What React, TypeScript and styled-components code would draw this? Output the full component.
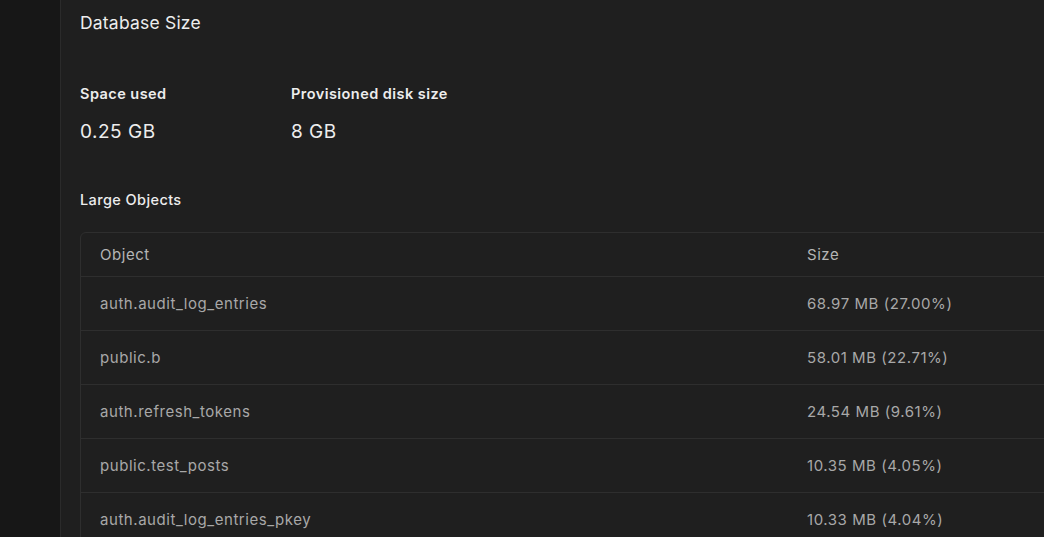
import React from 'react';
import styled, { createGlobalStyle } from 'styled-components';

const GlobalStyle = createGlobalStyle`
   html, body {
      margin: 0;
      padding: 0;
      background: #1f1f1f;
      font-family: Inter, "Noto Sans", sans-serif;
      -webkit-font-smoothing: antialiased;
   }
`;

const Layout = styled.div`
   display: flex;
   width: 1044px;
   height: 537px;
   overflow: hidden;
`;

const Sidebar = styled.aside`
   flex: 0 0 60px;
   background: #171717;
   border-right: 1px solid #2b2b2b;
`;

const Main = styled.main`
   flex: 0 0 auto;
   width: 1100px;
   padding: 9px 0 0 19px;
   background: #1f1f1f;
`;

const Title = styled.h1`
   margin: 0;
   font-size: 17.5px;
   line-height: 28px;
   font-weight: 400;
   letter-spacing: 0.2px;
   color: #ededed;
`;

const Stats = styled.div`
   display: flex;
   margin-top: 46px;
`;

const Stat = styled.div<{ $width: number }>`
   width: ${(p) => p.$width}px;
   display: flex;
   flex-direction: column;
`;

const StatLabel = styled.span`
   font-size: 14.5px;
   line-height: 22px;
   font-weight: 600;
   letter-spacing: 0.45px;
   color: #ededed;
`;

const StatValue = styled.span`
   margin-top: 13px;
   font-size: 19px;
   line-height: 28px;
   letter-spacing: 0.5px;
   color: #ededed;
`;

const SectionTitle = styled.h2`
   margin: 43px 0 0;
   font-size: 14.5px;
   line-height: 22px;
   font-weight: 500;
   letter-spacing: 0.4px;
   color: #ededed;
`;

const Table = styled.div`
   margin: 21px 0 0;
   border: 1px solid #2e2e2e;
   border-radius: 6px;
   overflow: hidden;
   background: #1f1f1f;
`;

const Row = styled.div<{ $header?: boolean }>`
   display: grid;
   grid-template-columns: 707px 1fr;
   align-items: center;
   height: ${(p) => (p.$header ? 43 : 53)}px;
   border-top: ${(p) => (p.$header ? 'none' : '1px solid #2e2e2e')};
   padding-left: 19px;
   font-size: 15px;
   letter-spacing: 0.55px;
   color: ${(p) => (p.$header ? '#b5b5b5' : '#a8a8a8')};
`;

const rows = [
   ['auth.audit_log_entries', '68.97 MB (27.00%)'],
   ['public.b', '58.01 MB (22.71%)'],
   ['auth.refresh_tokens', '24.54 MB (9.61%)'],
   ['public.test_posts', '10.35 MB (4.05%)'],
   ['auth.audit_log_entries_pkey', '10.33 MB (4.04%)'],
];

const App: React.FC = () => (
   <>
      <GlobalStyle />
      <Layout>
         <Sidebar />
         <Main>
            <Title>Database Size</Title>
            <Stats>
               <Stat $width={211}>
                  <StatLabel>Space used</StatLabel>
                  <StatValue>0.25 GB</StatValue>
               </Stat>
               <Stat $width={220}>
                  <StatLabel>Provisioned disk size</StatLabel>
                  <StatValue>8 GB</StatValue>
               </Stat>
            </Stats>
            <SectionTitle>Large Objects</SectionTitle>
            <Table>
               <Row $header>
                  <span>Object</span>
                  <span>Size</span>
               </Row>
               {rows.map(([name, size]) => (
                  <Row key={name}>
                     <span>{name}</span>
                     <span>{size}</span>
                  </Row>
               ))}
            </Table>
         </Main>
      </Layout>
   </>
);

export default App;
